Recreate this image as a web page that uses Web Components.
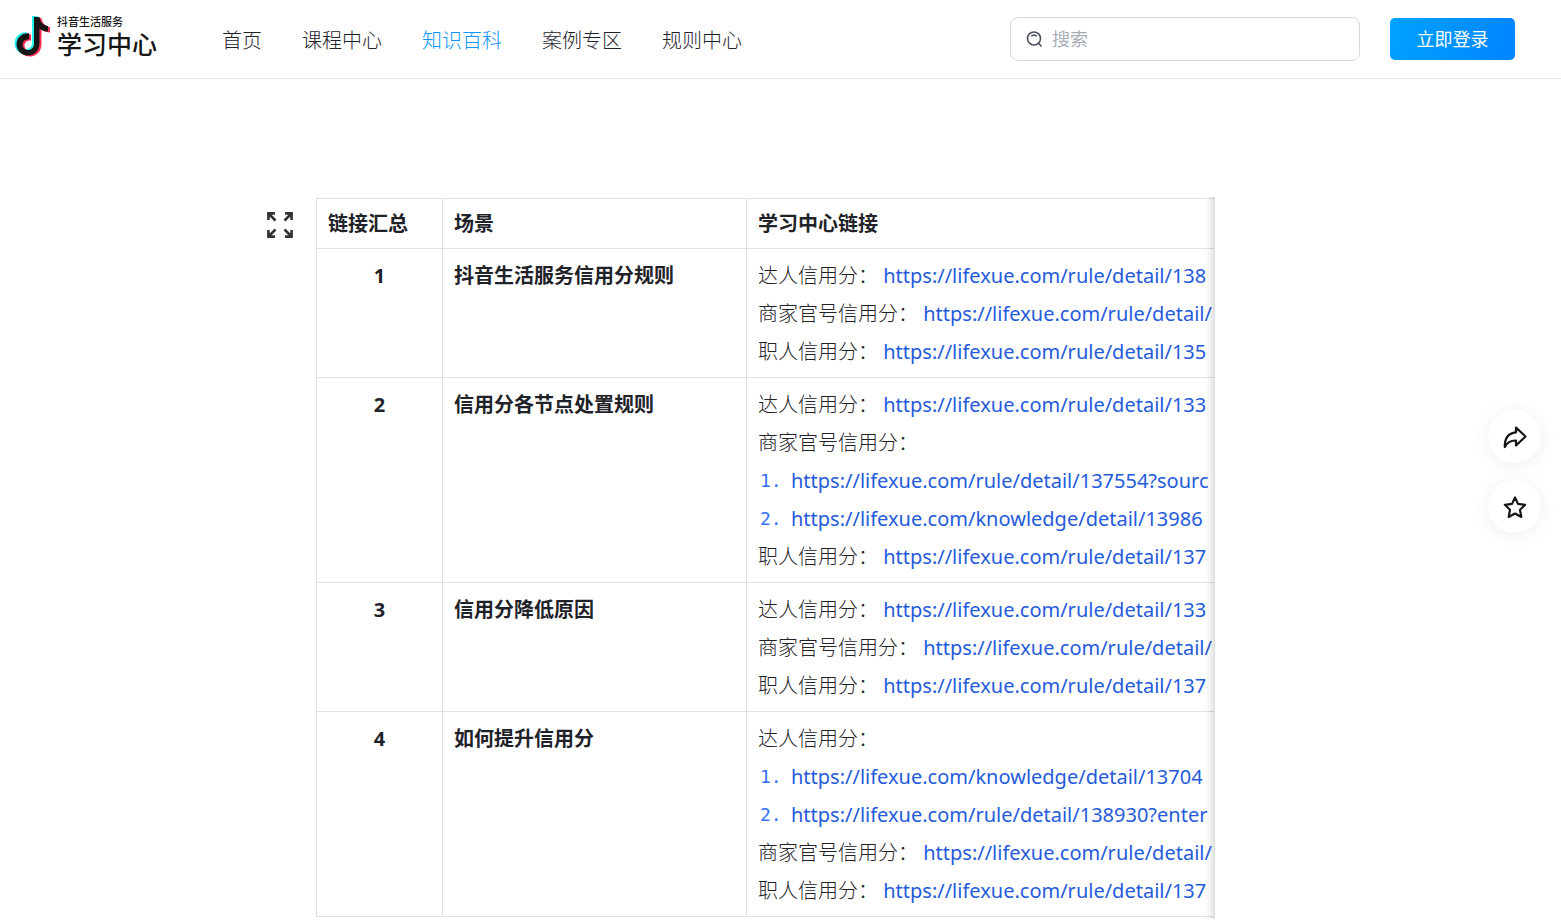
<!DOCTYPE html>
<html lang="zh-CN">
<head>
<meta charset="utf-8">
<title>学习中心</title>
<style>
  body {
    margin: 0;
    background: #fff;
    color: #1f2329;
    font: 20px/38px "Noto Sans", "Noto Sans CJK SC", sans-serif;
  }
</style>
</head>
<body>
<site-header>
  <brand-logo slot="brand"></brand-logo>
  <nav-item slot="nav" href="#home">首页</nav-item>
  <nav-item slot="nav" href="#course">课程中心</nav-item>
  <nav-item slot="nav" href="#knowledge" current>知识百科</nav-item>
  <nav-item slot="nav" href="#case">案例专区</nav-item>
  <nav-item slot="nav" href="#rule">规则中心</nav-item>
  <search-box slot="tools"></search-box>
  <login-button slot="tools">立即登录</login-button>
</site-header>
<article-page>
  <link-table></link-table>
</article-page>
<float-actions>
  <round-button label="分享">
    <svg width="26" height="26" viewBox="0 0 26 26" fill="none" stroke="#161616" stroke-width="2.200" stroke-linejoin="round"><path d="M14 3.500 23.500 12.500 14 21.500V16.500C8.500 16.300 5.200 18.200 2.800 23C2.600 14.500 6.500 9 14 8.300Z"/></svg>
  </round-button>
  <round-button label="收藏">
    <svg width="26" height="26" viewBox="0 0 26 26" fill="none" stroke="#161616" stroke-width="2.200" stroke-linejoin="round"><path d="M13 3.500 16 9.900 23.200 10.800 18 15.700 19.300 23 13 19.500 6.700 23 8 15.700 2.800 10.800 10 9.900Z"/></svg>
  </round-button>
</float-actions>

<script>
const define = (name, html, setup) => {
  const template = document.createElement('template');
  template.innerHTML = html;
  customElements.define(name, class extends HTMLElement {
    constructor() {
      super();
      this.attachShadow({ mode: 'open' }).append(template.content.cloneNode(true));
    }
    connectedCallback() {
      if (setup) setup(this, this.shadowRoot);
    }
  });
};

define('site-header', `
  <style>
    :host { display: block; border-bottom: 1px solid #e8e9eb; }
    header { display: flex; align-items: center; height: 78px; padding: 0 46px 0 14px; }
    nav { display: flex; gap: 40px; margin-left: 64px; padding-top: 3px; }
    .tools { display: flex; align-items: center; gap: 30px; margin-left: auto; }
  </style>
  <header>
    <slot name="brand"></slot>
    <nav aria-label="主导航"><slot name="nav"></slot></nav>
    <div class="tools"><slot name="tools"></slot></div>
  </header>`);

define('brand-logo', `
  <style>
    :host { display: block; }
    a { display: flex; gap: 7px; margin-bottom: 4px; color: #161616; text-decoration: none; white-space: nowrap; }
    svg { display: block; margin-top: 1px; }
    .name { display: grid; width: 101px; }
    small { font-size: 11px; line-height: 14px; font-weight: 500; }
    strong { font-size: 25px; line-height: 30px; font-weight: 500; }
  </style>
  <a href="#home">
    <svg width="36" height="42" viewBox="0 0 36 42" aria-hidden="true">
      <defs><path id="note" d="M19 1H24.500C25 6 28.500 9.500 33 10V15.500C29.500 15.500 26.500 14.300 24.500 12.500V27C24.500 34.500 19.500 39.500 13 39.500C6.500 39.500 1.500 34.500 1.500 28.500C1.500 21.500 7.500 16.500 14 17.300V23.500C10.500 22.800 7.500 25.300 7.500 28.500C7.500 31.500 10 34 13 34C16.500 34 19 31.500 19 27.500Z"/></defs>
      <use href="#note" fill="#25f4ee" x="-1" y="-1"/>
      <use href="#note" fill="#fe2c55" x="3" y="1"/>
      <use href="#note" fill="#161616" x="1"/>
    </svg>
    <span class="name"><small>抖音生活服务</small><strong>学习中心</strong></span>
  </a>`);

define('nav-item', `
  <style>
    :host { display: block; }
    a { color: #1d2129; text-decoration: none; white-space: nowrap; font-weight: 300; }
    :host([current]) a { color: #0a94ff; }
  </style>
  <a><slot></slot></a>`, (host, root) => {
    const link = root.querySelector('a');
    link.href = host.getAttribute('href');
    if (host.hasAttribute('current')) link.setAttribute('aria-current', 'page');
  });

define('search-box', `
  <style>
    :host { display: block; width: 350px; }
    label { display: flex; align-items: center; gap: 9px; box-sizing: border-box; height: 44px;
      padding: 0 15px; border: 1px solid #d3d9e0; border-radius: 8px; }
    input { flex: 1; min-width: 0; padding: 0; border: 0; outline: 0; background: none;
      font: inherit; font-size: 18px; line-height: 26px; color: #1d2129; }
    input::placeholder { color: #a9adb5; opacity: 1; }
  </style>
  <label>
    <svg width="17" height="17" viewBox="0 0 17 17" fill="none" stroke="#4b515c" stroke-width="1.600" stroke-linecap="round" aria-hidden="true"><circle cx="8" cy="7.500" r="6.500"/><path d="m12.500 12.200 2.700 2.800M5.800 4.800Q8 3.200 10.200 4.800"/></svg>
    <input type="search" placeholder="搜索" aria-label="搜索">
  </label>`);

define('login-button', `
  <style>
    :host { display: block; }
    button { display: block; width: 125px; height: 42px; padding: 0; border: 0; border-radius: 5px;
      background: linear-gradient(105deg, #00a2ff, #0084ff); color: #fff;
      font: inherit; font-size: 18px; line-height: 42px; cursor: pointer; }
  </style>
  <button type="button"><slot></slot></button>`);

define('article-page', `
  <style>
    :host { display: block; padding: 118px 346px 0 266px; }
    main { display: grid; grid-template-columns: 28px minmax(0, 1fr); column-gap: 22px; align-items: start; }
    button { display: block; margin-top: 14px; padding: 0; border: 0; background: none; cursor: pointer; }
    svg { display: block; }
  </style>
  <main>
    <button type="button" aria-label="全屏查看">
      <svg width="28" height="28" viewBox="0 0 28 28" fill="none" stroke="#333" stroke-width="2.600">
        <path d="M2.400 9V2.400H9M3 3 9.500 9.500M19 2.400H25.600V9M25 3 18.500 9.500M2.400 19V25.600H9M3 25 9.500 18.500M19 25.600H25.600V19M25 25 18.500 18.500"/>
      </svg>
    </button>
    <slot></slot>
  </main>`);

const rows = [
  ['抖音生活服务信用分规则', [
    ['达人信用分：', 'rule/detail/138'],
    ['商家官号信用分：', 'rule/detail/'],
    ['职人信用分：', 'rule/detail/135']]],
  ['信用分各节点处置规则', [
    ['达人信用分：', 'rule/detail/133'],
    ['商家官号信用分：'],
    [1, 'rule/detail/137554?sourc'],
    [2, 'knowledge/detail/13986'],
    ['职人信用分：', 'rule/detail/137']]],
  ['信用分降低原因', [
    ['达人信用分：', 'rule/detail/133'],
    ['商家官号信用分：', 'rule/detail/'],
    ['职人信用分：', 'rule/detail/137']]],
  ['如何提升信用分', [
    ['达人信用分：'],
    [1, 'knowledge/detail/13704'],
    [2, 'rule/detail/138930?enter'],
    ['商家官号信用分：', 'rule/detail/'],
    ['职人信用分：', 'rule/detail/137']]]
];

const line = ([lead, path]) => {
  const link = path ? `<a href="https://lifexue.com/${path}">https://lifexue.com/${path}</a>` : '';
  return typeof lead === 'number'
    ? `<div class="item"><span class="mark">${lead}.</span>${link}</div>`
    : `<div><span class="who">${lead}</span> ${link}</div>`;
};

define('link-table', `
  <style>
    :host { display: block; position: relative; overflow: hidden; padding: 1px 0 2px; }
    :host::after { content: ""; position: absolute; inset: 0 0 0 auto; width: 9px;
      border-right: 1px solid #dcdddf; box-sizing: border-box;
      background: linear-gradient(to right, rgba(31,35,41,0), rgba(31,35,41,.12)); pointer-events: none; }
    table { width: 1100px; table-layout: fixed; border-collapse: collapse; }
    .no { width: 126px; }
    .scene { width: 304px; }
    th, td { border: 1px solid #dee0e3; padding: 8px 11px 6px; vertical-align: top;
      text-align: left; white-space: nowrap; }
    thead th { padding: 6px 11px 5px; }
    th { font-weight: 700; }
    .index { text-align: center; }
    a { color: #245bdb; text-decoration: none; }
    .who { font-weight: 300; }
    .item { display: flex; }
    .mark { box-sizing: border-box; width: 33px; padding-left: 2px; flex: none; color: #3370ff;
      font-family: "DejaVu Sans Mono", monospace; font-size: 18px; }
  </style>
  <table>
    <colgroup><col class="no"><col class="scene"><col></colgroup>
    <thead><tr><th scope="col">链接汇总</th><th scope="col">场景</th><th scope="col">学习中心链接</th></tr></thead>
    <tbody>${rows.map(([scene, lines], i) => `
      <tr><th class="index">${i + 1}</th><th scope="row">${scene}</th><td>${lines.map(line).join('')}</td></tr>`).join('')}
    </tbody>
  </table>`);

define('float-actions', `
  <style>
    :host { position: fixed; right: 20px; top: 410px; display: grid; gap: 17px; }
  </style>
  <slot></slot>`);

define('round-button', `
  <style>
    :host { display: block; }
    button { display: grid; place-items: center; width: 53px; height: 53px; padding: 0; border: 0;
      border-radius: 50%; background: #fff; box-shadow: 0 2px 16px rgba(60, 90, 130, .1); cursor: pointer; }
    ::slotted(svg) { display: block; }
  </style>
  <button type="button"><slot></slot></button>`, (host, root) => {
    root.querySelector('button').setAttribute('aria-label', host.getAttribute('label'));
  });
</script>
</body>
</html>
